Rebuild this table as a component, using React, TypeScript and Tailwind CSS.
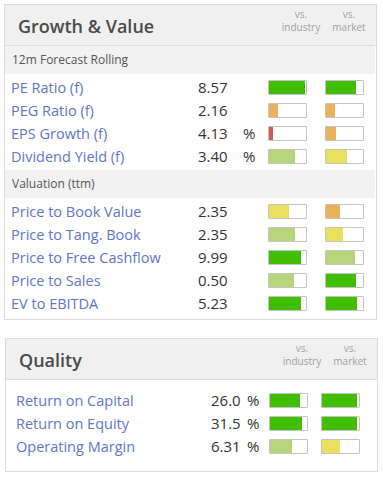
import React from 'react';

type Tone = 'green' | 'lime' | 'yellow' | 'orange' | 'red';

interface Metric {
  label: string;
  value: string;
  pct?: boolean;
  ind: [Tone, number];
  mkt: [Tone, number];
}

const toneClass: Record<Tone, string> = {
  green: 'bg-[#41be00]',
  lime: 'bg-[#b9d57c]',
  yellow: 'bg-[#e9e060]',
  orange: 'bg-[#ebb25c]',
  red: 'bg-[#d75858]',
};

const forecast: Metric[] = [
  { label: 'PE Ratio (f)', value: '8.57', ind: ['green', 36], mkt: ['green', 30] },
  { label: 'PEG Ratio (f)', value: '2.16', ind: ['orange', 9], mkt: ['orange', 9] },
  { label: 'EPS Growth (f)', value: '4.13', pct: true, ind: ['red', 4], mkt: ['orange', 10] },
  { label: 'Dividend Yield (f)', value: '3.40', pct: true, ind: ['lime', 26], mkt: ['yellow', 21] },
];

const valuation: Metric[] = [
  { label: 'Price to Book Value', value: '2.35', ind: ['yellow', 20], mkt: ['orange', 14] },
  { label: 'Price to Tang. Book', value: '2.35', ind: ['lime', 26], mkt: ['yellow', 17] },
  { label: 'Price to Free Cashflow', value: '9.99', ind: ['green', 32], mkt: ['lime', 29] },
  { label: 'Price to Sales', value: '0.50', ind: ['lime', 25], mkt: ['green', 30] },
  { label: 'EV to EBITDA', value: '5.23', ind: ['green', 32], mkt: ['green', 31] },
];

const quality: Metric[] = [
  { label: 'Return on Capital', value: '26.0', pct: true, ind: ['green', 30], mkt: ['green', 35] },
  { label: 'Return on Equity', value: '31.5', pct: true, ind: ['green', 32], mkt: ['green', 35] },
  { label: 'Operating Margin', value: '6.31', pct: true, ind: ['lime', 22], mkt: ['yellow', 18] },
];

function Bar({ tone, fill }: { tone: Tone; fill: number }) {
  return (
    <div className="w-[39px] h-[15px] border border-[#c4c4c4] bg-white rounded-[1px] flex">
      <div className={`h-full ${toneClass[tone]}`} style={{ width: fill }} />
    </div>
  );
}

function CardHeader({ title }: { title: string }) {
  return (
    <div className="h-[41px] bg-[#f0f0f0] border-b border-[#dcdcdc] flex items-center">
      <h2 className="pl-[13px] pt-[2px] text-[18px] font-semibold text-[#4a4a4a] flex-1 leading-none">{title}</h2>
      <div className="w-[50px] text-center text-[10px] leading-[13px] text-[#a0a0a0] self-start pt-[3px]">
        vs.<br />industry
      </div>
      <div className="w-[46px] text-center text-[10px] leading-[13px] text-[#a0a0a0] self-start pt-[3px] mr-[4px]">
        vs.<br />market
      </div>
    </div>
  );
}

function Row({ m, wide }: { m: Metric; wide?: boolean }) {
  return (
    <div className="h-[23px] flex items-center">
      <a className={`${wide ? 'w-[205px] pl-[10px]' : 'w-[193px] pl-[6px]'} text-[14.5px] text-[#6275c8] whitespace-nowrap`}>
        {m.label}
      </a>
      <span className={`${wide ? 'w-[36px]' : 'w-[45px]'} text-[15px] text-[#333]`}>{m.value}</span>
      <span className={`${wide ? 'w-[22px]' : 'w-[25px]'} text-[15px] text-[#333]`}>{m.pct ? '%' : ''}</span>
      <Bar tone={m.ind[0]} fill={m.ind[1]} />
      <div className={wide ? 'w-[13px]' : 'w-[18px]'} />
      <Bar tone={m.mkt[0]} fill={m.mkt[1]} />
    </div>
  );
}

function Section({ title }: { title: string }) {
  return (
    <div className="h-[28px] bg-[#f2f2f2] mr-[1px] flex items-center pl-[7px] text-[12px] text-[#555]">
      {title}
    </div>
  );
}

export default function App() {
  return (
    <div className="w-[383px] h-[480px] bg-white pt-[4px] font-['Open_Sans',sans-serif]">
      {/* Growth & Value */}
      <div className="ml-[4px] w-[373px] border border-[#dcdcdc]">
        <CardHeader title="Growth & Value" />
        <Section title="12m Forecast Rolling" />
        <div className="pt-[2px] pb-[2px]">
          {forecast.map((m) => (
            <Row key={m.label} m={m} />
          ))}
        </div>
        <Section title="Valuation (ttm)" />
        <div className="pt-[2px] pb-[4px]">
          {valuation.map((m) => (
            <Row key={m.label} m={m} />
          ))}
        </div>
      </div>

      {/* Quality */}
      <div className="ml-[5px] mt-[18px] w-[373px] border border-[#dcdcdc]">
        <CardHeader title="Quality" />
        <div className="pt-[9px] pb-[13px]">
          {quality.map((m) => (
            <Row key={m.label} m={m} wide />
          ))}
        </div>
      </div>
    </div>
  );
}
